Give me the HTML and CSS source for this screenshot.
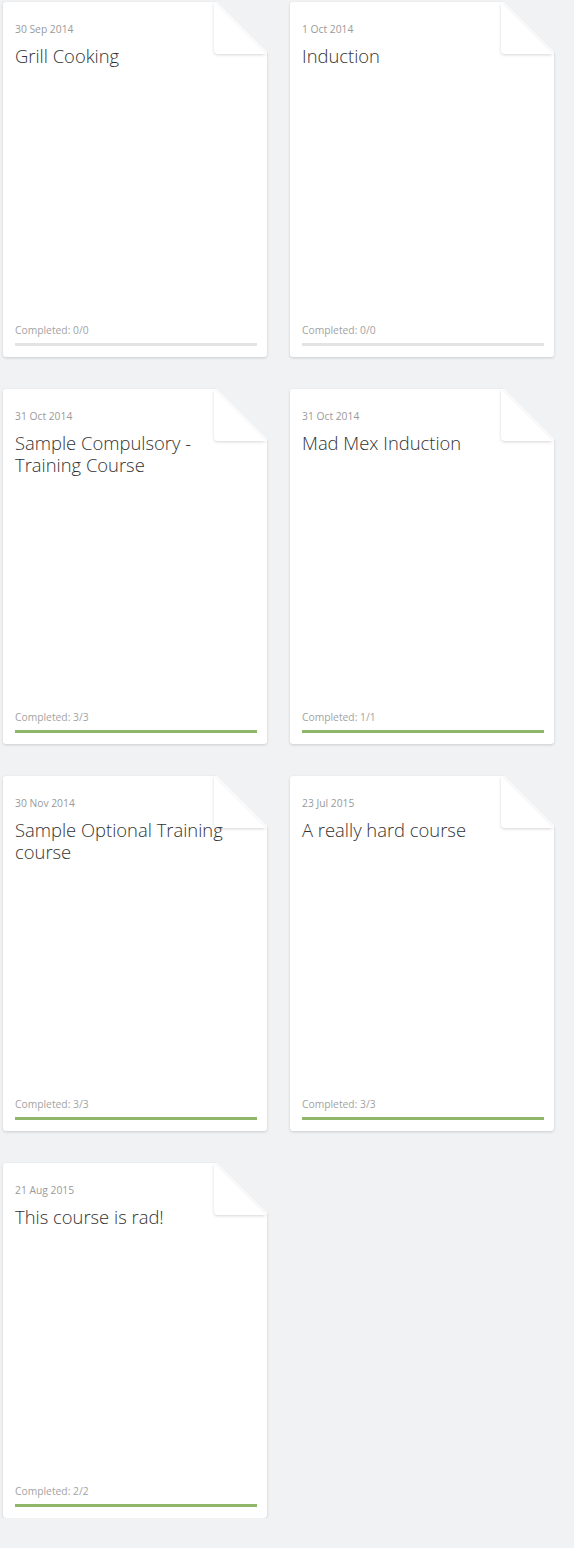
FILE: index.html
```html
<!DOCTYPE html>
<html>
<head>
<meta charset="utf-8">
<link rel="stylesheet" href="styles.css">
</head>
<body>
<div class="grid">
  <div class="card">
    <div class="cut"></div><div class="flap"><div class="flap-in"></div></div>
    <div class="date">30 Sep 2014</div>
    <div class="title">Grill Cooking</div>
    <div class="spacer"></div>
    <div class="done">Completed: 0/0</div>
    <div class="bar"></div>
  </div>
  <div class="card">
    <div class="cut"></div><div class="flap"><div class="flap-in"></div></div>
    <div class="date">1 Oct 2014</div>
    <div class="title">Induction</div>
    <div class="spacer"></div>
    <div class="done">Completed: 0/0</div>
    <div class="bar"></div>
  </div>
  <div class="card">
    <div class="cut"></div><div class="flap"><div class="flap-in"></div></div>
    <div class="date">31 Oct 2014</div>
    <div class="title">Sample Compulsory - Training Course</div>
    <div class="spacer"></div>
    <div class="done">Completed: 3/3</div>
    <div class="bar full"></div>
  </div>
  <div class="card">
    <div class="cut"></div><div class="flap"><div class="flap-in"></div></div>
    <div class="date">31 Oct 2014</div>
    <div class="title">Mad Mex Induction</div>
    <div class="spacer"></div>
    <div class="done">Completed: 1/1</div>
    <div class="bar full"></div>
  </div>
  <div class="card">
    <div class="cut"></div><div class="flap"><div class="flap-in"></div></div>
    <div class="date">30 Nov 2014</div>
    <div class="title">Sample Optional Training course</div>
    <div class="spacer"></div>
    <div class="done">Completed: 3/3</div>
    <div class="bar full"></div>
  </div>
  <div class="card">
    <div class="cut"></div><div class="flap"><div class="flap-in"></div></div>
    <div class="date">23 Jul 2015</div>
    <div class="title">A really hard course</div>
    <div class="spacer"></div>
    <div class="done">Completed: 3/3</div>
    <div class="bar full"></div>
  </div>
  <div class="card">
    <div class="cut"></div><div class="flap"><div class="flap-in"></div></div>
    <div class="date">21 Aug 2015</div>
    <div class="title">This course is rad!</div>
    <div class="spacer"></div>
    <div class="done">Completed: 2/2</div>
    <div class="bar full"></div>
  </div>
</div>
</body>
</html>
```
FILE: styles.css
```css
html, body {
  margin: 0;
  padding: 0;
  background: #f1f2f4;
  min-height: 100%;
}
body {
  font-family: "Open Sans", "Liberation Sans", sans-serif;
}
.grid {
  display: grid;
  grid-template-columns: 264px 264px;
  column-gap: 23px;
  row-gap: 32px;
  padding: 2px 0 0 3px;
}
.card {
  position: relative;
  height: 355px;
  box-sizing: border-box;
  background: #fff;
  border-radius: 3px;
  box-shadow: 0 1px 3px rgba(0,0,0,0.16);
  padding: 20px 10px 11px 12px;
  display: flex;
  flex-direction: column;
}
.cut {
  position: absolute;
  top: -3px;
  right: -3px;
  width: 56px;
  height: 56px;
  background: #f1f2f4;
  clip-path: polygon(0 0, 100% 0, 100% 100%);
}
.flap {
  position: absolute;
  top: 0;
  right: 1px;
  width: 52px;
  height: 52px;
  filter: drop-shadow(0 1px 1.5px rgba(0,0,0,0.16));
}
.flap-in {
  width: 100%;
  height: 100%;
  background: #fff;
  border-bottom-left-radius: 4px;
  clip-path: polygon(0 0, 0 100%, 100% 100%);
}
.date {
  font-size: 10.3px;
  line-height: 14px;
  color: #9a9a9a;
}
.title {
  position: relative;
  max-width: 228px;
  margin-top: 7px;
  font-size: 18.4px;
  font-weight: 300;
  line-height: 22px;
  color: #333;
  padding-top: 2px;
}
.spacer { flex: 1; }
.done {
  font-size: 10.3px;
  line-height: 14px;
  color: #a3a3a3;
}
.bar {
  margin-top: 6px;
  height: 3px;
  background: #e3e3e3;
}
.bar.full {
  background: #90b66a;
}
```
